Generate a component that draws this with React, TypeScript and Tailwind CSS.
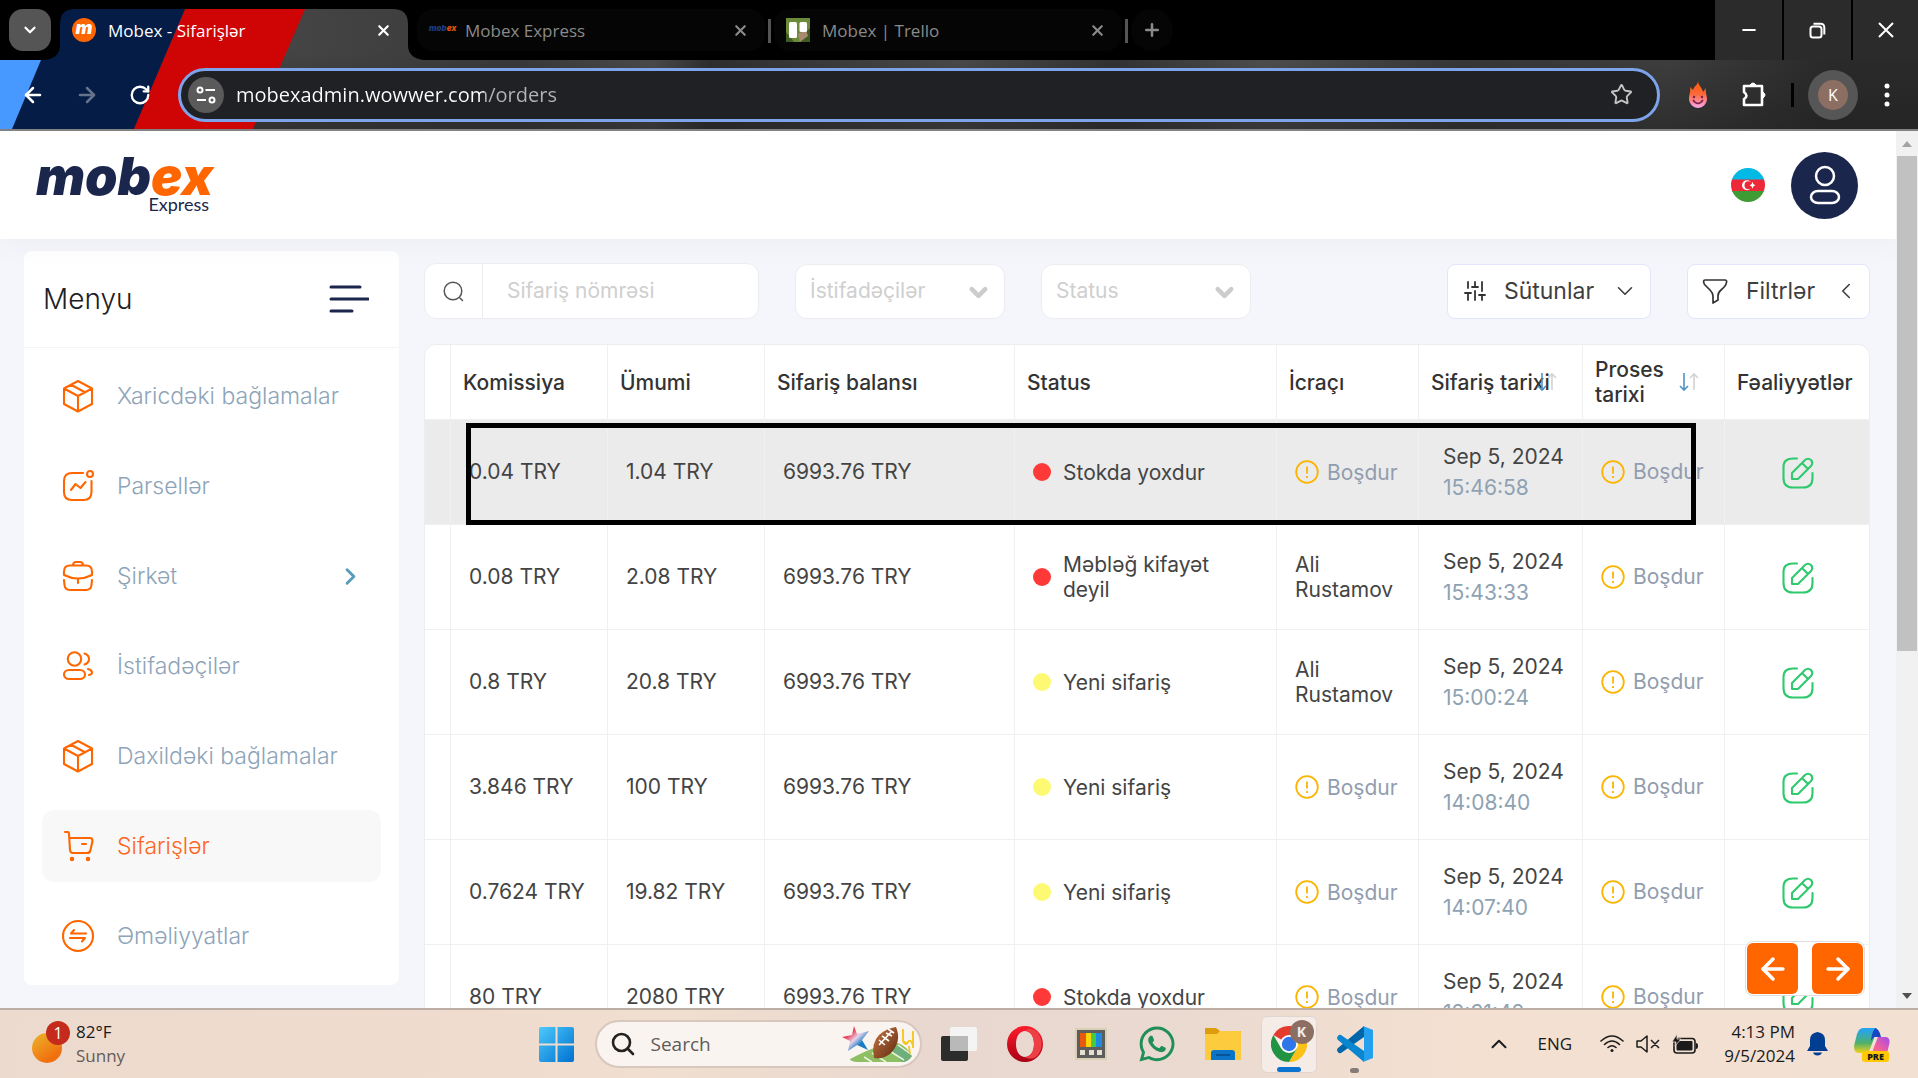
import type { ReactNode } from "react";
import { ChevronDown, ChevronUp, ChevronLeft, ChevronRight, X, Plus, Minus, ArrowLeft, ArrowRight, RotateCw, Star } from "lucide-react";
import { FaWhatsapp } from "react-icons/fa";

const UI = "font-['Open_Sans','Noto_Sans',sans-serif]";

/* ---------- browser window ---------- */

function ThemeArt() {
  return (
    <svg className="absolute inset-0 h-full w-full" aria-hidden="true">
      <defs>
        <linearGradient id="smoke" x1="0" y1="0" x2="1918" y2="0" gradientUnits="userSpaceOnUse">
          <stop offset="0.12" stopColor="#474747" />
          <stop offset="0.27" stopColor="#3a3a3a" />
          <stop offset="0.34" stopColor="#4c4c4c" />
          <stop offset="0.37" stopColor="#2f2f2f" />
          <stop offset="0.5" stopColor="#4b4b4b" />
          <stop offset="0.58" stopColor="#333333" />
          <stop offset="0.66" stopColor="#505050" />
          <stop offset="0.76" stopColor="#383838" />
          <stop offset="0.87" stopColor="#3f3f3f" />
          <stop offset="0.95" stopColor="#2b2b2b" />
        </linearGradient>
        <linearGradient id="shade" x1="0" y1="0" x2="0" y2="1">
          <stop offset="0.4" stopColor="#1e1e1e" stopOpacity="0" />
          <stop offset="1" stopColor="#1e1e1e" stopOpacity="0.5" />
        </linearGradient>
      </defs>
      <rect width="100%" height="100%" fill="url(#smoke)" />
      <rect width="100%" height="100%" fill="url(#shade)" />
      <path d="M0 0H189L134 129H0Z" fill="#041c46" />
      <path d="M0 60H41L12 129H0Z" fill="#4899ff" />
      <path d="M189 0H309L253 129H134Z" fill="#cf0404" />
      <path d="M0 0H6000V60H423Q408 58 408 45V24Q408 9 393 9H75Q60 9 60 24V45Q60 58 45 60H0Z" fill="#000" />
    </svg>
  );
}

function TrelloIcon() {
  return (
    <svg viewBox="0 0 24 24" className="size-6" aria-hidden="true">
      <rect width="24" height="24" fill="#6b8a3a" />
      <path d="M0 14L8 24H0ZM16 18L24 10V24H14Z" fill="#3f5c22" />
      <path d="M12 16L20 12L22 18L14 24Z" fill="#a98a6f" />
      <rect x="3" y="4" width="8" height="16" rx="1.5" fill="#fff" />
      <rect x="13.500" y="4" width="7.500" height="10" rx="1.500" fill="#fff" />
    </svg>
  );
}

function Tab({ icon, title, active }: { icon: ReactNode; title: string; active?: boolean }) {
  return (
    <div className={active ? "flex h-[42px] w-[348px] items-center rounded-2xl px-3 text-white" : "flex h-[42px] w-[348px] items-center rounded-2xl bg-[#050505] px-3 text-[#8a8a8a]"}>
      {icon}
      <span className="ml-3 flex-1 truncate pt-[2px] text-[17px]">{title}</span>
      <button aria-label={"Close " + title} className="mx-1">
        <X size={17} strokeWidth={3} />
      </button>
    </div>
  );
}

function BrowserChrome() {
  return (
    <header className={"relative shrink-0 border-b-2 border-[#828282] text-white " + UI}>
      <ThemeArt />
      <div className="relative flex h-[60px] items-start">
        <div className="flex flex-1 items-start pt-[9px] pl-[9px]">
          <button aria-label="Search tabs" className="mr-[9px] flex size-[42px] items-center justify-center rounded-[14px] bg-[#555]">
            <ChevronDown size={18} strokeWidth={3} />
          </button>
          <Tab
            active
            title="Mobex - Sifarişlər"
            icon={<span className="flex size-6 items-center justify-center rounded-full bg-[#ff6600] pb-1 font-['Inter',sans-serif] text-lg leading-none font-black italic">m</span>}
          />
          <div className="w-[9px]" />
          <Tab
            title="Mobex Express"
            icon={<span className="w-6 pb-1 font-['Inter',sans-serif] text-[8px] font-black text-[#1c3a78] italic">mob<span className="text-[#e0520a]">ex</span></span>}
          />
          <div className="mx-[3px] mt-[10px] h-6 w-[3px] bg-[#555]" />
          <Tab title="Mobex | Trello" icon={<TrelloIcon />} />
          <div className="mx-[3px] mt-[10px] h-6 w-[3px] bg-[#555]" />
          <button aria-label="New tab" className="flex size-[42px] items-center justify-center rounded-full bg-[#050505] text-[#8a8a8a]">
            <Plus size={20} strokeWidth={3} />
          </button>
        </div>
        <div className="flex gap-[2px]">
          <button aria-label="Minimize" className="flex h-[60px] w-[67px] items-center justify-center bg-[#2b2b2b]">
            <Minus size={20} strokeWidth={2.5} />
          </button>
          <button aria-label="Restore" className="flex h-[60px] w-[67px] items-center justify-center bg-[#2b2b2b]">
            <svg width="17" height="17" viewBox="0 0 17 17" fill="none" stroke="#fff" strokeWidth="2" aria-hidden="true">
              <rect x="1.500" y="4.500" width="11" height="11" rx="2.500" />
              <path d="M4.500 1.800H11.500Q15.300 1.800 15.300 5.500V12.500" />
            </svg>
          </button>
          <button aria-label="Close window" className="flex h-[60px] w-[65px] items-center justify-center bg-[#2b2b2b]">
            <svg width="16" height="16" viewBox="0 0 16 16" stroke="#fff" strokeWidth="2" aria-hidden="true"><path d="M1 1L15 15M15 1L1 15" /></svg>
          </button>
        </div>
      </div>
      <div className="relative flex h-[69px] items-center pr-7 pl-[21px]">
        <nav className="flex w-[157px] items-center gap-[30px]">
          <button aria-label="Back"><ArrowLeft size={24} strokeWidth={2.5} /></button>
          <button aria-label="Forward" className="text-[#66738c]"><ArrowRight size={24} strokeWidth={2.5} /></button>
          <button aria-label="Reload"><RotateCw size={22} strokeWidth={2.5} /></button>
        </nav>
        <div className="flex h-[54px] flex-1 items-center rounded-full border-3 border-[#7da4ea] bg-[#202124] pr-6 pl-[7px]">
          <button aria-label="Site information" className="flex size-9 items-center justify-center rounded-full bg-[#5a5a5a]">
            <svg width="20" height="20" viewBox="0 0 20 20" fill="none" stroke="#fff" strokeWidth="2" aria-hidden="true">
              <circle cx="4" cy="5" r="2.500" /><path d="M9.500 5H19M1 15H10" /><circle cx="16" cy="15" r="2.500" />
            </svg>
          </button>
          <input
            aria-label="Address"
            defaultValue="mobexadmin.wowwer.com/orders"
            className="ml-3 flex-1 bg-[linear-gradient(90deg,#fff_248px,#b5b5b5_248px)] bg-clip-text text-xl text-transparent outline-none"
          />
          <button aria-label="Bookmark" className="text-[#c4c4c4]"><Star size={23} strokeWidth={2} /></button>
        </div>
        <div className="ml-[26px] flex items-center">
          <svg width="24" height="30" viewBox="0 0 24 30" aria-label="Extension" role="img">
            <defs><linearGradient id="fire" x1="0" y1="0" x2="0" y2="1"><stop offset="0" stopColor="#ff5a00" /><stop offset="0.5" stopColor="#fb6a3c" /><stop offset="1" stopColor="#f9a8ee" /></linearGradient></defs>
            <path d="M12 1C12 5 16 7 17 12L20 8C19 12 21 15 21 19A9 9 0 0 1 3 19C3 14 5 12 4 7L7 10C8 6 12 5 12 1Z" fill="url(#fire)" />
            <path d="M7 20Q12 27 17 20" fill="none" stroke="#7a1e4b" strokeWidth="1.500" /><circle cx="8" cy="17" r="1.200" fill="#7a1e4b" /><circle cx="16" cy="17" r="1.200" fill="#7a1e4b" />
          </svg>
          <button aria-label="Extensions" className="ml-[31px]">
            <svg width="26" height="28" viewBox="0 0 26 28" fill="none" stroke="#fff" strokeWidth="2.600" strokeLinejoin="round" aria-hidden="true">
              <path d="M3 5H21V24H3V18Q8 15 3 11Z" /><circle cx="12" cy="4" r="2" fill="#fff" stroke="none" /><path d="M9 4Q12 0 15 4ZM22 11Q26 14 22 17Z" fill="#fff" strokeWidth="1" />
            </svg>
          </button>
          <div className="mr-[14px] ml-6 h-6 w-[3px] bg-black" />
          <button aria-label="Profile" className="flex size-[50px] items-center justify-center rounded-full bg-[#565656]">
            <span className="flex size-[30px] items-center justify-center rounded-full bg-[#8d6e63] text-base">K</span>
          </button>
          <button aria-label="Browser menu" className="ml-[26px]">
            <svg width="6" height="26" viewBox="0 0 6 26" fill="#fff" aria-hidden="true"><circle cx="3" cy="4" r="2.500" /><circle cx="3" cy="13" r="2.500" /><circle cx="3" cy="22" r="2.500" /></svg>
          </button>
        </div>
      </div>
    </header>
  );
}

/* ---------- site header ---------- */

function SiteHeader() {
  return (
    <div className="relative z-10 flex h-[108px] shrink-0 items-center justify-between bg-white pr-[38px] pl-9 shadow-[0_4px_30px_rgba(0,0,0,0.04)]">
      <a href="#home" aria-label="Mobex Express" className="flex flex-col">
        <span className="text-[52px] leading-10 font-black text-[#1b264c] italic">
          mob<span className="text-[#ff6600]">ex</span>
        </span>
        <span className="-mt-[3px] mr-1 self-end font-['Lato',sans-serif] text-lg leading-5 text-[#1b264c]">Express</span>
      </a>
      <div className="flex items-center gap-[26px]">
        <button aria-label="Azərbaycan dili">
          <svg width="34" height="34" viewBox="0 0 34 34" aria-hidden="true">
            <clipPath id="round"><circle cx="17" cy="17" r="17" /></clipPath>
            <g clipPath="url(#round)">
              <rect width="34" height="12" fill="#00b9e4" /><rect y="11.500" width="34" height="12" fill="#ed2939" /><rect y="23" width="34" height="11" fill="#3f9c35" />
            </g>
            <circle cx="16" cy="17.300" r="5" fill="#fff" /><circle cx="17.500" cy="17.300" r="4" fill="#ed2939" />
            <path d="M21.500 13.800L22.300 16L24.300 17.300L22.300 18.600L21.500 20.800L20.700 18.600L18.700 17.300L20.700 16Z" fill="#fff" />
          </svg>
        </button>
        <button aria-label="Profil" className="flex size-[67px] items-center justify-center rounded-full bg-[#1b264c]">
          <svg width="32" height="40" viewBox="0 0 32 40" fill="none" stroke="#fff" strokeWidth="2.500" aria-hidden="true">
            <circle cx="16" cy="11" r="9" /><rect x="2" y="26" width="28" height="12" rx="7" />
          </svg>
        </button>
      </div>
    </div>
  );
}

/* ---------- sidebar ---------- */

function NavIcon({ children }: { children: ReactNode }) {
  return (
    <svg width="36" height="36" viewBox="0 0 36 36" fill="none" stroke="#ff6600" strokeWidth="2.100" strokeLinecap="round" strokeLinejoin="round" aria-hidden="true">
      {children}
    </svg>
  );
}

const boxIcon = <NavIcon><path d="M18 3L32 10.500V26L18 33.500L4 26V10.500ZM4 10.500L18 18L32 10.500M18 18V33.500M11 6.800L25 14.300" /></NavIcon>;
const parcelIcon = <NavIcon><path d="M23 5H12Q4 5 4 13V24Q4 32 12 32H23.500Q31.500 32 31.500 24V13M11 22L15.500 16L20.500 20L25.500 14" /><circle cx="30" cy="6" r="3" /></NavIcon>;
const companyIcon = <NavIcon><path d="M13 7.500Q13 4 16 4H20Q23 4 23 7.500M10 7.500H26Q32 7.500 32 13.500V17Q18 24 4 17V13.500Q4 7.500 10 7.500ZM4 22L4.500 27Q5 32 10 32H26Q31 32 31.500 27L32 22M18 21V25" /></NavIcon>;
const usersIcon = <NavIcon><circle cx="14.500" cy="11" r="6.700" /><rect x="4" y="22" width="21" height="9" rx="5" /><path d="M24.500 5.500Q29 7 29 11Q29 15 24.500 16.500M28 21Q32 22 32 24.500Q32 26.500 29 27" /></NavIcon>;
const cartIcon = <NavIcon><path d="M5 4H8Q9 4 9 6L10 22Q10.300 25 13 25H27Q30 25 30.500 22L32.500 13Q32.500 10 30 10H9.500M22 16H26" /><circle cx="12" cy="31" r="1.200" fill="#ff6600" /><circle cx="28" cy="31" r="1.200" fill="#ff6600" /></NavIcon>;
const swapIcon = <NavIcon><circle cx="18" cy="18" r="15" /><path d="M26 15.500H11L14 12M10 20H25L22 23.500" /></NavIcon>;

const navItems = [
  { label: "Xaricdəki bağlamalar", icon: boxIcon },
  { label: "Parsellər", icon: parcelIcon },
  { label: "Şirkət", icon: companyIcon, expandable: true },
  { label: "İstifadəçilər", icon: usersIcon },
  { label: "Daxildəki bağlamalar", icon: boxIcon },
  { label: "Sifarişlər", icon: cartIcon, active: true },
  { label: "Əməliyyatlar", icon: swapIcon },
];

function Sidebar() {
  return (
    <aside className="w-[375px] shrink-0 self-start rounded-lg bg-white">
      <div className="flex h-[97px] items-center justify-between border-b border-[#f3f4f6] pr-[30px] pl-[19px]">
        <h1 className="text-[28px] font-light text-[#1d2026]">Menyu</h1>
        <button aria-label="Menyunu yığ">
          <svg width="40" height="28" viewBox="0 0 40 28" stroke="#1b264c" strokeWidth="3" strokeLinecap="round" aria-hidden="true"><path d="M2 2H31M2 14H39M2 26H23" /></svg>
        </button>
      </div>
      <nav className="flex flex-col gap-[18px] px-[18px] pt-3 pb-[13px]">
        {navItems.map((item) => (
          <a
            key={item.label}
            href={"#" + item.label}
            className={item.active ? "flex h-[72px] items-center rounded-xl bg-[#f8f8f8] px-[18px] text-[#ff6422]" : "flex h-[72px] items-center rounded-xl px-[18px] text-[#8ea4b8]"}
          >
            {item.icon}
            <span className="ml-[21px] flex-1 text-[23px] font-light whitespace-nowrap">{item.label}</span>
            {item.expandable && <ChevronRight size={27} strokeWidth={2.6} className="-mr-px text-[#5a9cba]" />}
          </a>
        ))}
      </nav>
    </aside>
  );
}

/* ---------- filters ---------- */

function FilterSelect({ label }: { label: string }) {
  return (
    <div className="relative w-[210px]">
      <select aria-label={label} className="h-[55px] w-full appearance-none rounded-xl border border-[#ededf0] bg-white pr-12 pl-[14px] text-[21px] text-[#cfcfcf]">
        <option>{label}</option>
      </select>
      <ChevronDown size={27} strokeWidth={4} className="pointer-events-none absolute top-[15px] right-[13px] text-[#cccccc]" />
    </div>
  );
}

function Filters() {
  return (
    <div className="flex items-center">
      <div className="flex h-14 w-[335px] items-center rounded-xl border border-[#ededf0] bg-white">
        <button aria-label="Axtar" className="flex h-full w-[58px] items-center justify-center border-r border-[#ededf0]">
          <svg width="21" height="21" viewBox="0 0 21 21" fill="none" stroke="#555" strokeWidth="1.500" strokeLinecap="round" aria-hidden="true"><circle cx="10" cy="10" r="8.800" /><path d="M17 17L19.500 19.500" /></svg>
        </button>
        <input aria-label="Sifariş nömrəsi" placeholder="Sifariş nömrəsi" className="w-full min-w-0 flex-1 px-6 text-[21px] outline-none placeholder:text-[#cfcfcf]" />
      </div>
      <div className="ml-9"><FilterSelect label="İstifadəçilər" /></div>
      <div className="ml-9"><FilterSelect label="Status" /></div>
      <div className="ml-auto flex gap-9 text-[23px] text-[#3f3f3f]">
        <button className="flex h-[55px] w-[204px] items-center justify-between rounded-lg border border-[#e2e5fb] bg-white pr-3 pl-4">
          <svg width="22" height="22" viewBox="0 0 22 22" stroke="#333" strokeWidth="1.800" strokeLinecap="round" aria-hidden="true"><path d="M4 2V8M4 13V20M1 13H7M11 2V7M8 7H14M11 11V20M18 2V11M18 15V20M15 15H21" /></svg>
          Sütunlar
          <ChevronDown size={26} strokeWidth={1.500} />
        </button>
        <button className="flex h-[55px] w-[183px] items-center rounded-lg border border-[#e2e5fb] bg-white pr-[10px] pl-[14px]">
          <svg width="26" height="26" viewBox="0 0 26 26" fill="none" stroke="#333" strokeWidth="1.700" strokeLinejoin="round" aria-hidden="true"><path d="M3 2H23Q25 2 24.500 4.500Q24 8 19 12Q16 14.500 16 18V22L11 25V18Q11 15 8 12L2.500 6.500Q0.500 2 3 2Z" /></svg>
          <span className="flex-1 text-center">Filtrlər</span>
          <ChevronLeft size={26} strokeWidth={1.500} />
        </button>
      </div>
    </div>
  );
}

/* ---------- orders table ---------- */

type Order = { commission: string; total: string; status: string; tone: "red" | "yellow"; executor?: string; time: string; hovered?: boolean };

const orders: Order[] = [
  { commission: "0.04 TRY", total: "1.04 TRY", status: "Stokda yoxdur", tone: "red", time: "15:46:58", hovered: true },
  { commission: "0.08 TRY", total: "2.08 TRY", status: "Məbləğ kifayət deyil", tone: "red", executor: "Ali Rustamov", time: "15:43:33" },
  { commission: "0.8 TRY", total: "20.8 TRY", status: "Yeni sifariş", tone: "yellow", executor: "Ali Rustamov", time: "15:00:24" },
  { commission: "3.846 TRY", total: "100 TRY", status: "Yeni sifariş", tone: "yellow", time: "14:08:40" },
  { commission: "0.7624 TRY", total: "19.82 TRY", status: "Yeni sifariş", tone: "yellow", time: "14:07:40" },
  { commission: "80 TRY", total: "2080 TRY", status: "Stokda yoxdur", tone: "red", time: "12:31:42" },
];

const TH = "border-r border-b border-[#f0f0f0] px-3 font-medium last:border-r-0";
const TD = "border-r border-b border-[#f0f0f0] pl-[18px] last:border-r-0";

function Empty() {
  return (
    <span className="flex items-center gap-2 text-[#919daf]">
      <svg width="24" height="24" viewBox="0 0 24 24" fill="none" stroke="#fbb500" strokeWidth="1.800" className="shrink-0" aria-hidden="true"><circle cx="12" cy="12" r="10.800" /><path d="M12 6.500V13.500M12 16V18" /></svg>
      Boşdur
    </span>
  );
}

function SortArrows() {
  return (
    <svg width="20" height="20" viewBox="0 0 20 20" fill="none" strokeWidth="1.600" className="absolute top-[27px] right-[25px]" aria-hidden="true">
      <path d="M5 1V18M1 14L5 18L9 14" stroke="#4f94c4" /><path d="M15 18V2M11 6L15 2L19 6" stroke="#d3d3d3" />
    </svg>
  );
}

function EditIcon() {
  return (
    <svg width="32" height="32" viewBox="0 0 32 32" fill="none" stroke="#2fc96e" strokeWidth="2.100" strokeLinecap="round" strokeLinejoin="round" aria-hidden="true">
      <path d="M15 1.500H11Q1.500 1.500 1.500 10V21Q1.500 30.500 11 30.500H21Q30.500 30.500 30.500 21V16" />
      <path d="M10 22V16L23 3Q26 0.500 29 3Q31.500 6 29 9L16 22ZM20 6L26 12" />
    </svg>
  );
}

function OrdersTable() {
  return (
    <div className="relative mt-[25px] overflow-hidden rounded-xl border border-[#ededf0] bg-white text-[21px] text-[#444]">
      <table className="w-full table-fixed border-separate border-spacing-0 text-left">
        <colgroup>
          <col className="w-[26px]" /><col className="w-[157px]" /><col className="w-[157px]" /><col className="w-[250px]" /><col className="w-[262px]" /><col className="w-[142px]" /><col className="w-[164px]" /><col className="w-[142px]" /><col className="w-[145px]" />
        </colgroup>
        <thead>
          <tr className="h-[75px] leading-[25px] text-[#333]">
            <th className={TH} aria-label="Seçim" />
            <th className={TH}>Komissiya</th>
            <th className={TH}>Ümumi</th>
            <th className={TH}>Sifariş balansı</th>
            <th className={TH}>Status</th>
            <th className={TH}>İcraçı</th>
            <th className={TH + " relative whitespace-nowrap"}>Sifariş tarixi<SortArrows /></th>
            <th className={TH + " relative"}>Proses<br />tarixi<SortArrows /></th>
            <th className={TH + " whitespace-nowrap"}>Fəaliyyətlər</th>
          </tr>
        </thead>
        <tbody>
          {orders.map((o) => (
            <tr key={o.time} className={o.hovered ? "h-[105px] bg-[#ebebeb]" : "h-[105px]"}>
              <td className={TD} />
              <td className={TD}>{o.commission}</td>
              <td className={TD}>{o.total}</td>
              <td className={TD}>6993.76 TRY</td>
              <td className={TD}>
                <span className="flex items-center gap-3 leading-[25px]">
                  <span className={o.tone === "red" ? "size-[18px] shrink-0 rounded-full bg-[#ff3838]" : "size-[18px] shrink-0 rounded-full bg-[#fdf973]"} />
                  <span className="w-40">{o.status}</span>
                </span>
              </td>
              <td className={TD + " pr-4 leading-[25px]"}>{o.executor ?? <Empty />}</td>
              <td className={TD + " leading-[31px] whitespace-nowrap"}>
                <span className="block pl-1.5">Sep 5, 2024</span>
                <span className="block pl-1.5 text-[#8ea2b3]">{o.time}</span>
              </td>
              <td className={TD}><Empty /></td>
              <td className="border-b border-[#f0f0f0] text-center">
                <button aria-label="Redaktə et" className="align-middle"><EditIcon /></button>
              </td>
            </tr>
          ))}
        </tbody>
      </table>
      <div className="pointer-events-none absolute top-[78px] right-[173px] left-[41px] h-[102px] border-5 border-black" />
    </div>
  );
}

function Pager() {
  return (
    <div className="absolute right-[31px] bottom-3 flex gap-[14px] rounded-lg border border-[#dedede] bg-white p-px">
      <button aria-label="Əvvəlki" className="flex size-[51px] items-center justify-center rounded-md bg-[#ff6600] text-white"><ArrowLeft size={34} strokeWidth={2.5} /></button>
      <button aria-label="Növbəti" className="flex size-[51px] items-center justify-center rounded-md bg-[#ff6600] text-white"><ArrowRight size={34} strokeWidth={2.5} /></button>
    </div>
  );
}

function ScrollBar() {
  return (
    <div className="flex w-[22px] shrink-0 flex-col items-center bg-[#f1f1f1]" aria-hidden="true">
      <div className="flex h-[25px] items-center"><div className="border-x-[5px] border-b-[6px] border-x-transparent border-b-[#a3a3a3]" /></div>
      <div className="h-[495px] w-5 bg-[#c1c1c1]" />
      <div className="mt-auto flex h-6 items-center"><div className="border-x-[5px] border-t-[6px] border-x-transparent border-t-[#505050]" /></div>
    </div>
  );
}

/* ---------- taskbar ---------- */

function StartIcon() {
  return (
    <svg width="35" height="35" viewBox="0 0 35 35" aria-hidden="true">
      <defs><linearGradient id="win" x1="0" y1="0" x2="35" y2="35" gradientUnits="userSpaceOnUse"><stop offset="0" stopColor="#4cc9fb" /><stop offset="1" stopColor="#0071d0" /></linearGradient></defs>
      <path d="M2 0H16.500V16.500H0V2Q0 0 2 0ZM18.500 0H33Q35 0 35 2V16.500H18.500ZM0 18.500H16.500V35H2Q0 35 0 33ZM18.500 18.500H35V33Q35 35 33 35H18.500Z" fill="url(#win)" />
    </svg>
  );
}

function SearchArt() {
  return (
    <svg width="74" height="40" viewBox="0 0 74 40" aria-hidden="true">
      <defs>
        <linearGradient id="star" x1="0" y1="0" x2="1" y2="1"><stop offset="0.3" stopColor="#ea3d55" /><stop offset="0.5" stopColor="#e4d3ea" /><stop offset="0.7" stopColor="#1a7cc4" /></linearGradient>
        <linearGradient id="ball" x1="0" y1="0" x2="1" y2="1"><stop offset="0.2" stopColor="#b5683a" /><stop offset="1" stopColor="#5b2910" /></linearGradient>
      </defs>
      <path d="M8 35Q40 18 56 19Q66 23 70 32Q66 38 60 38H14Q8 37 8 35Z" fill="#8fbf63" />
      <path d="M46 22Q60 20 70 32Q66 38 60 38Z" fill="#6fae7d" />
      <path d="M22 33L30 38M30 29L44 38M46 26L62 36M56 21L70 31" stroke="#e9f4dc" strokeWidth="1.500" />
      <path d="M12 2L15 10L27 7L20 16L26 26L15 21L6 27L8 17L0 13L10 11Z" fill="url(#star)" />
      <path d="M54 3Q60 17 49 29Q41 36 32 34Q29 19 37 11Q45 4 54 3Z" fill="url(#ball)" />
      <path d="M37 21L50 7M37 16L43 21M40 12L47 17M44 9L50 12M46 5L52 9" stroke="#fff" strokeWidth="1.600" />
      <path d="M61 5V17L66 20M71 7V24M61 18Q64 22 66 18T71 21M67 22L68 30" fill="none" stroke="#f5c518" strokeWidth="1.800" />
    </svg>
  );
}

function TaskViewIcon() {
  return (
    <svg width="36" height="34" viewBox="0 0 36 34" aria-hidden="true">
      <rect x="0" y="9" width="27" height="25" rx="2" fill="#2c2c2c" /><rect x="9" y="0" width="27" height="24" rx="2" fill="#f4f4f4" /><rect x="9" y="9" width="18" height="15" fill="#b9b9b9" />
    </svg>
  );
}

function OperaIcon() {
  return (
    <svg width="36" height="36" viewBox="0 0 36 36" aria-hidden="true">
      <defs><linearGradient id="opera" x1="0" y1="0" x2="0" y2="1"><stop offset="0" stopColor="#ff1b2d" /><stop offset="1" stopColor="#a70014" /></linearGradient></defs>
      <path fillRule="evenodd" d="M18 0A18 18 0 1 0 18 36A18 18 0 1 0 18 0ZM18 5C23 5 27 10 27 18S23 31 18 31S9 26 9 18S13 5 18 5Z" fill="url(#opera)" />
      <path d="M18 5C22 0 30 5 31 7A18 18 0 0 1 30 30C26 34 21 33 18 31C23 31 27 26 27 18S23 5 18 5Z" fill="#ee3f45" />
    </svg>
  );
}

function MonitorIcon() {
  return (
    <svg width="32" height="32" viewBox="0 0 32 32" aria-hidden="true">
      <rect width="32" height="32" rx="1" fill="#d8cfb5" /><rect x="2" y="2" width="28" height="28" fill="#5d5d5d" />
      <rect x="5" y="5" width="6" height="14" fill="#e8590c" /><rect x="11" y="5" width="5" height="14" fill="#fbd40a" /><rect x="16" y="5" width="5" height="14" fill="#4bc93d" /><rect x="21" y="5" width="6" height="14" fill="#1c8ce0" />
      <path d="M5 22H10V27H5ZM14 22H19V27H14ZM22 22H27V27H22Z" fill="#e5e0d0" />
    </svg>
  );
}

function FolderIcon() {
  return (
    <svg width="36" height="34" viewBox="0 0 36 34" aria-hidden="true">
      <path d="M0 2Q0 1 1 1H11L15 4H36V14H0Z" fill="#dd9c0c" /><path d="M0 7H12L15 4H35Q36 4 36 5V32Q36 33 35 33H1Q0 33 0 32Z" fill="#fdcb3e" />
      <path d="M6 33V26Q6 23 9 23H27Q30 23 30 26V33Z" fill="#0a74c8" /><path d="M11 28H25" stroke="#064a86" strokeWidth="1.500" />
    </svg>
  );
}

function ChromeIcon() {
  return (
    <svg width="36" height="36" viewBox="0 0 36 36" aria-hidden="true">
      <path d="M18 18L2.400 9A18 18 0 0 1 33.600 9Z" fill="#e33b2e" /><path d="M18 9H33.600A18 18 0 0 1 18 36L25.800 22.500Z" fill="#fbc116" /><path d="M2.400 9L10.200 22.500L25.800 22.500L18 36A18 18 0 0 1 2.400 9Z" fill="#229342" />
      <circle cx="18" cy="18" r="9" fill="#fff" /><circle cx="18" cy="18" r="7.200" fill="#2f76ea" />
    </svg>
  );
}

function CodeIcon() {
  return (
    <svg width="36" height="36" viewBox="0 0 36 36" aria-hidden="true">
      <path d="M27 0V11L4 27Q2 28 1 26Q-1 24 1 22Z" fill="#0065a9" /><path d="M27 36V25L4 9Q2 8 1 10Q-1 12 1 14Z" fill="#0a85d0" /><path d="M26 0L36 4V32L26 36Q27 35 27 33V3Q27 1 26 0Z" fill="#24a0ee" />
    </svg>
  );
}

function CopilotIcon() {
  return (
    <svg width="36" height="35" viewBox="0 0 36 35" aria-hidden="true">
      <defs>
        <linearGradient id="cpA" x1="0" y1="0" x2="0" y2="1"><stop offset="0.100" stopColor="#28a5ea" /><stop offset="0.600" stopColor="#4fb06a" /><stop offset="1" stopColor="#f4d21b" /></linearGradient>
        <linearGradient id="cpB" x1="1" y1="0" x2="0" y2="1"><stop offset="0" stopColor="#a24bea" /><stop offset="0.500" stopColor="#f0609c" /><stop offset="1" stopColor="#ff8a4c" /></linearGradient>
      </defs>
      <path d="M9 1H21Q24 1 22 6L16 22Q15 26 10 26H4Q0 26 0 19L3 7Q5 1 9 1Z" fill="url(#cpA)" />
      <path d="M19 1Q25 0 27 10H20L17 14Q18 3 22 1Z" fill="#1747c4" />
      <path d="M24 10H32Q37 11 35 18L32 30H12Q18 28 20 20Z" fill="url(#cpB)" />
    </svg>
  );
}

function Taskbar() {
  return (
    <footer className={"grid h-[70px] shrink-0 grid-cols-[1fr_auto_1fr] items-center border-t-2 border-[#bcaea4] bg-[linear-gradient(90deg,#eddace,#efdccf_25%,#f0decf_35%,#e9d8cf_48%,#e9d9d0_60%,#f3e0d1_76%,#f2e0d3)] " + UI}>
      <button className="flex items-center justify-self-start pl-8 text-left">
        <span className="relative mt-2 size-[30px] rounded-full bg-[linear-gradient(145deg,#edb52c,#f0700f_75%)]">
          <span className="absolute -top-3 -right-2 flex size-6 items-center justify-center rounded-full bg-[#c42b1c] text-base text-white">1</span>
        </span>
        <span className="ml-[14px] text-[17px] leading-6 text-[#1b1b1b]">82°F<br /><span className="text-[#655c57]">Sunny</span></span>
      </button>
      <div className="flex items-center pl-2">
        <button aria-label="Start"><StartIcon /></button>
        <label className="ml-[21px] flex h-12 w-[327px] items-center rounded-full border-2 border-[#d9c6bd] bg-[#faf4f1] pl-[14px]">
          <svg width="24" height="24" viewBox="0 0 24 24" fill="none" stroke="#222" strokeWidth="2.600" aria-hidden="true"><circle cx="10.500" cy="10.500" r="8.500" /><path d="M16.500 16.500L22 22" strokeLinecap="round" /></svg>
          <input aria-label="Search" placeholder="Search" className="ml-4 w-full min-w-0 flex-1 text-[19px] outline-none placeholder:text-[#5f5b59]" />
          <span className="mr-1"><SearchArt /></span>
        </label>
        <button aria-label="Task view" className="ml-[19px]"><TaskViewIcon /></button>
        <div className="ml-[15px] flex items-center">
          <button aria-label="Opera" className="flex w-[66px] justify-center"><OperaIcon /></button>
          <button aria-label="Monitor" className="flex w-[66px] justify-center"><MonitorIcon /></button>
          <button aria-label="WhatsApp" className="flex w-[66px] justify-center text-[#1f8f57]"><FaWhatsapp size={40} /></button>
          <button aria-label="Explorer" className="flex w-[66px] justify-center"><FolderIcon /></button>
          <button aria-label="Chrome" className="relative mx-[5px] flex h-[57px] w-14 items-center justify-center rounded-md border border-[#e2d5ce] bg-[#f5ece8]">
            <ChromeIcon />
            <span className="absolute top-[3px] right-[2px] flex size-6 items-center justify-center rounded-full bg-[#8d6e63] text-sm font-bold text-[#eee]">K</span>
            <span className="absolute bottom-0 h-[5px] w-6 rounded-full bg-[#0a74d0]" />
          </button>
          <button aria-label="Code" className="relative flex h-[57px] w-[66px] items-center justify-center"><CodeIcon /><span className="absolute bottom-0 h-[5px] w-[9px] rounded-full bg-[#857c77]" /></button>
        </div>
      </div>
      <div className="flex items-center justify-self-end pr-7 text-[17px] text-[#1b1b1b]">
        <button aria-label="Hidden icons"><ChevronUp size={26} strokeWidth={1.800} /></button>
        <span className="ml-[26px]">ENG</span>
        <svg className="ml-7" width="24" height="18" viewBox="0 0 24 18" fill="none" stroke="#1b1b1b" strokeWidth="1.600" strokeLinecap="round" role="img" aria-label="Wi-Fi"><path d="M1 6Q12 -4 23 6M4.500 9.500Q12 2.500 19.500 9.500M8 12.500Q12 9 16 12.500" /><circle cx="12" cy="15.500" r="1.500" fill="#1b1b1b" stroke="none" /></svg>
        <svg className="ml-3" width="24" height="18" viewBox="0 0 24 18" fill="none" stroke="#1b1b1b" strokeWidth="1.500" strokeLinejoin="round" role="img" aria-label="Muted"><path d="M1 6H5L11 1V17L5 12H1ZM15 5L23 13M23 5L15 13" /></svg>
        <svg className="ml-3" width="26" height="20" viewBox="0 0 26 20" role="img" aria-label="Battery"><rect x="2" y="4.500" width="21" height="14.500" rx="3" fill="none" stroke="#1b1b1b" strokeWidth="1.600" /><rect x="4.500" y="7" width="16" height="9.500" rx="1" fill="#1b1b1b" /><path d="M24 9Q26 9 26 12T24 15Z" fill="#1b1b1b" /><path d="M5 0L0 8H4L3 12L9 5H5Z" fill="#1b1b1b" stroke="#f3e0d1" strokeWidth="0.800" /></svg>
        <span className="ml-[26px] text-right leading-6">4:13 PM<br />9/5/2024</span>
        <svg className="ml-3" width="21" height="24" viewBox="0 0 21 24" fill="#003e92" role="img" aria-label="Notifications"><path d="M10.500 0Q18 1 18 8V14L21 19H0L3 14V8Q3 1 10.500 0ZM6 20.500H15Q14 23.500 10.500 23.500T6 20.500Z" /></svg>
        <button aria-label="Copilot" className="relative ml-[26px]">
          <CopilotIcon />
          <span className="absolute top-6 left-2 flex h-[11px] w-[27px] items-center justify-center rounded-[3px] bg-[#ffc800] text-[9px] leading-none font-extrabold">PRE</span>
        </button>
      </div>
    </footer>
  );
}

export default function App() {
  return (
    <div className="flex h-screen flex-col overflow-hidden font-['Inter',sans-serif]">
      <BrowserChrome />
      <div className="flex min-h-0 flex-1">
        <div className="relative flex min-w-0 flex-1 flex-col overflow-hidden bg-[#f5f6fb]">
          <SiteHeader />
          <div className="flex min-h-0 flex-1 gap-[25px] overflow-hidden pt-3 pr-[26px] pl-6">
            <Sidebar />
            <main className="min-w-0 flex-1 pt-3">
              <Filters />
              <OrdersTable />
            </main>
          </div>
          <Pager />
        </div>
        <ScrollBar />
      </div>
      <Taskbar />
    </div>
  );
}
